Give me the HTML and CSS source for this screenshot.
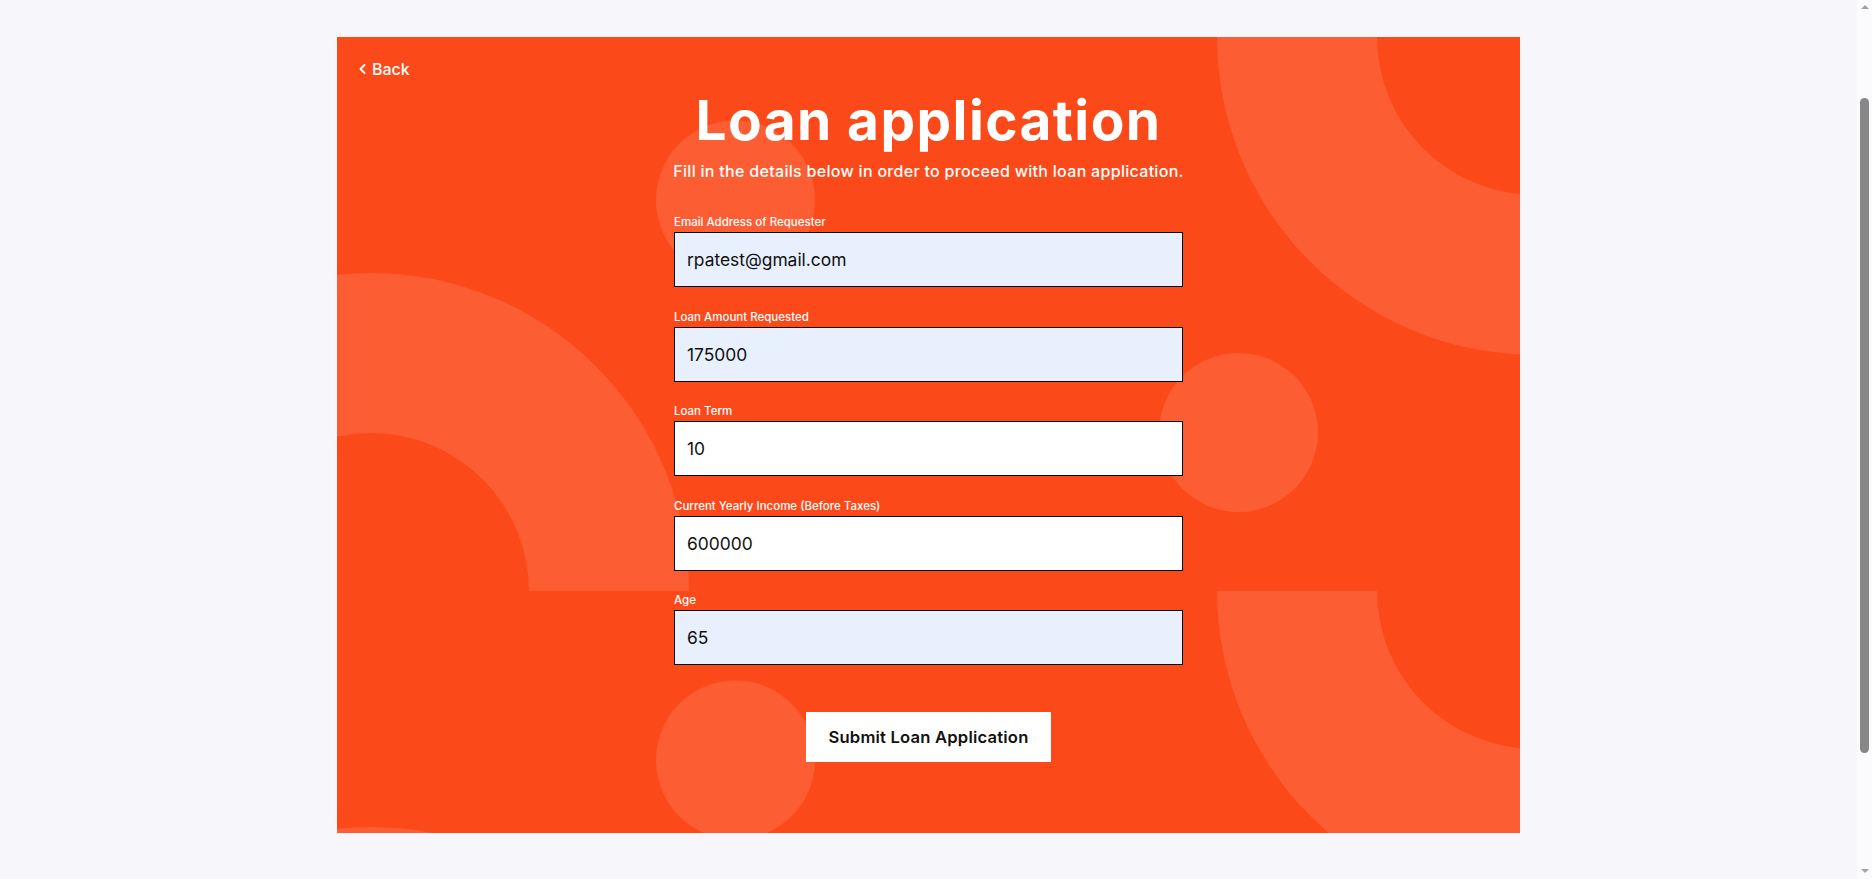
FILE: index.html
```html
<!DOCTYPE html>
<html lang="en">
<head>
<meta charset="utf-8">
<title>Loan application</title>
<link rel="stylesheet" href="styles.css">
</head>
<body>
<main class="page">
  <section class="card">
    <svg class="deco" width="1183" height="796" viewBox="0 0 1183 796" aria-hidden="true">
      <g fill="#fd5d32">
        <path d="M1516 0 A318 318 0 0 1 880 0 L1040 0 A158 158 0 0 0 1356 0 Z"/>
        <path d="M-284 554 A318 318 0 0 1 352 554 L192 554 A158 158 0 0 0 -124 554 Z"/>
        <path d="M1516 554 A318 318 0 0 1 880 554 L1040 554 A158 158 0 0 0 1356 554 Z"/>
        <path d="M-284 1108 A318 318 0 0 1 352 1108 L192 1108 A158 158 0 0 0 -124 1108 Z"/>
        <circle cx="398.5" cy="163" r="79.5"/>
        <circle cx="901.5" cy="395.5" r="79.5"/>
        <circle cx="398.5" cy="723" r="79.5"/>
      </g>
    </svg>
    <div class="content">
      <a class="back" href="#">
        <svg class="chev" width="7" height="10" viewBox="0 0 7 10"><polyline points="5.5,1 1.5,5 5.5,9" fill="none" stroke="#fff" stroke-width="1.8" stroke-linecap="round" stroke-linejoin="round"/></svg>
        <span>Back</span>
      </a>
      <h1 class="title">Loan application</h1>
      <p class="subtitle">Fill in the details below in order to proceed with loan application.</p>
      <form class="form">
        <div class="field">
          <label class="label">Email Address of Requester</label>
          <div class="input filled">rpatest@gmail.com</div>
        </div>
        <div class="field">
          <label class="label">Loan Amount Requested</label>
          <div class="input filled">175000</div>
        </div>
        <div class="field">
          <label class="label">Loan Term</label>
          <div class="input">10</div>
        </div>
        <div class="field">
          <label class="label">Current Yearly Income (Before Taxes)</label>
          <div class="input">600000</div>
        </div>
        <div class="field">
          <label class="label">Age</label>
          <div class="input filled">65</div>
        </div>
        <div class="actions">
          <button class="submit" type="button">Submit Loan Application</button>
        </div>
      </form>
    </div>
  </section>
</main>
<div class="scrollbar" aria-hidden="true">
  <span class="arrow up"></span>
  <span class="thumb"></span>
  <span class="arrow down"></span>
</div>
</body>
</html>
```

FILE: styles.css
```css
html, body {
  margin: 0;
  padding: 0;
}
body {
  background: #f7f7fb;
  font-family: Inter, "Open Sans", sans-serif;
  color: #fff;
  overflow: hidden;
}
.page {
  width: calc(100% - 15px);
  padding: 37px 0 46px;
}
.card {
  position: relative;
  width: 1183px;
  height: 796px;
  margin: 0 auto;
  background: #fc4919;
  overflow: hidden;
}
.deco {
  position: absolute;
  left: 0;
  top: 0;
}
.content {
  position: relative;
  display: flex;
  flex-direction: column;
  align-items: center;
  padding: 20px 22px 0;
}
.back {
  align-self: flex-start;
  display: flex;
  align-items: center;
  gap: 6px;
  color: #fff;
  text-decoration: none;
  font-size: 16px;
  line-height: 24px;
  font-weight: 500;
}
.chev {
  display: block;
}
.title {
  margin: 6px 0 0;
  font-size: 55px;
  line-height: 67px;
  font-weight: 700;
  letter-spacing: 1.4px;
}
.subtitle {
  margin: 5px 0 0;
  font-size: 16px;
  line-height: 24px;
  font-weight: 500;
  letter-spacing: 0.3px;
}
.form {
  width: 509px;
  margin-top: 30px;
  display: flex;
  flex-direction: column;
  gap: 20.5px;
}
.field {
  display: flex;
  flex-direction: column;
  gap: 1px;
}
.label {
  font-size: 11.5px;
  line-height: 18px;
  font-weight: 500;
}
.input {
  box-sizing: border-box;
  height: 55px;
  border: 1px solid #000;
  background: #fff;
  color: #111;
  font-size: 17.4px;
  padding: 0 12px;
  display: flex;
  align-items: center;
}
.input.filled {
  background: #e8f0fe;
}
.actions {
  display: flex;
  justify-content: center;
  margin-top: 26px;
}
.submit {
  width: 245px;
  height: 50px;
  border: 0;
  background: #fff;
  color: #111;
  font-family: Inter, "Open Sans", sans-serif;
  font-size: 16.6px;
  font-weight: 600;
  letter-spacing: 0.2px;
  padding: 0;
}

/* browser scrollbar (drawn, sits over the page edge) */
.scrollbar {
  position: fixed;
  top: 0;
  right: 0;
  width: 15px;
  height: 100vh;
  background: #fbfbfd;
}
.arrow {
  position: absolute;
  left: 3.5px;
  width: 0;
  height: 0;
  border-left: 4px solid transparent;
  border-right: 4px solid transparent;
}
.arrow.up {
  top: 5px;
  border-bottom: 4px solid #a3a3a3;
}
.arrow.down {
  bottom: 6px;
  border-top: 4px solid #a3a3a3;
}
.thumb {
  position: absolute;
  left: 3px;
  top: 98px;
  width: 9px;
  height: 655px;
  border-radius: 5px;
  background: #878787;
}
```
